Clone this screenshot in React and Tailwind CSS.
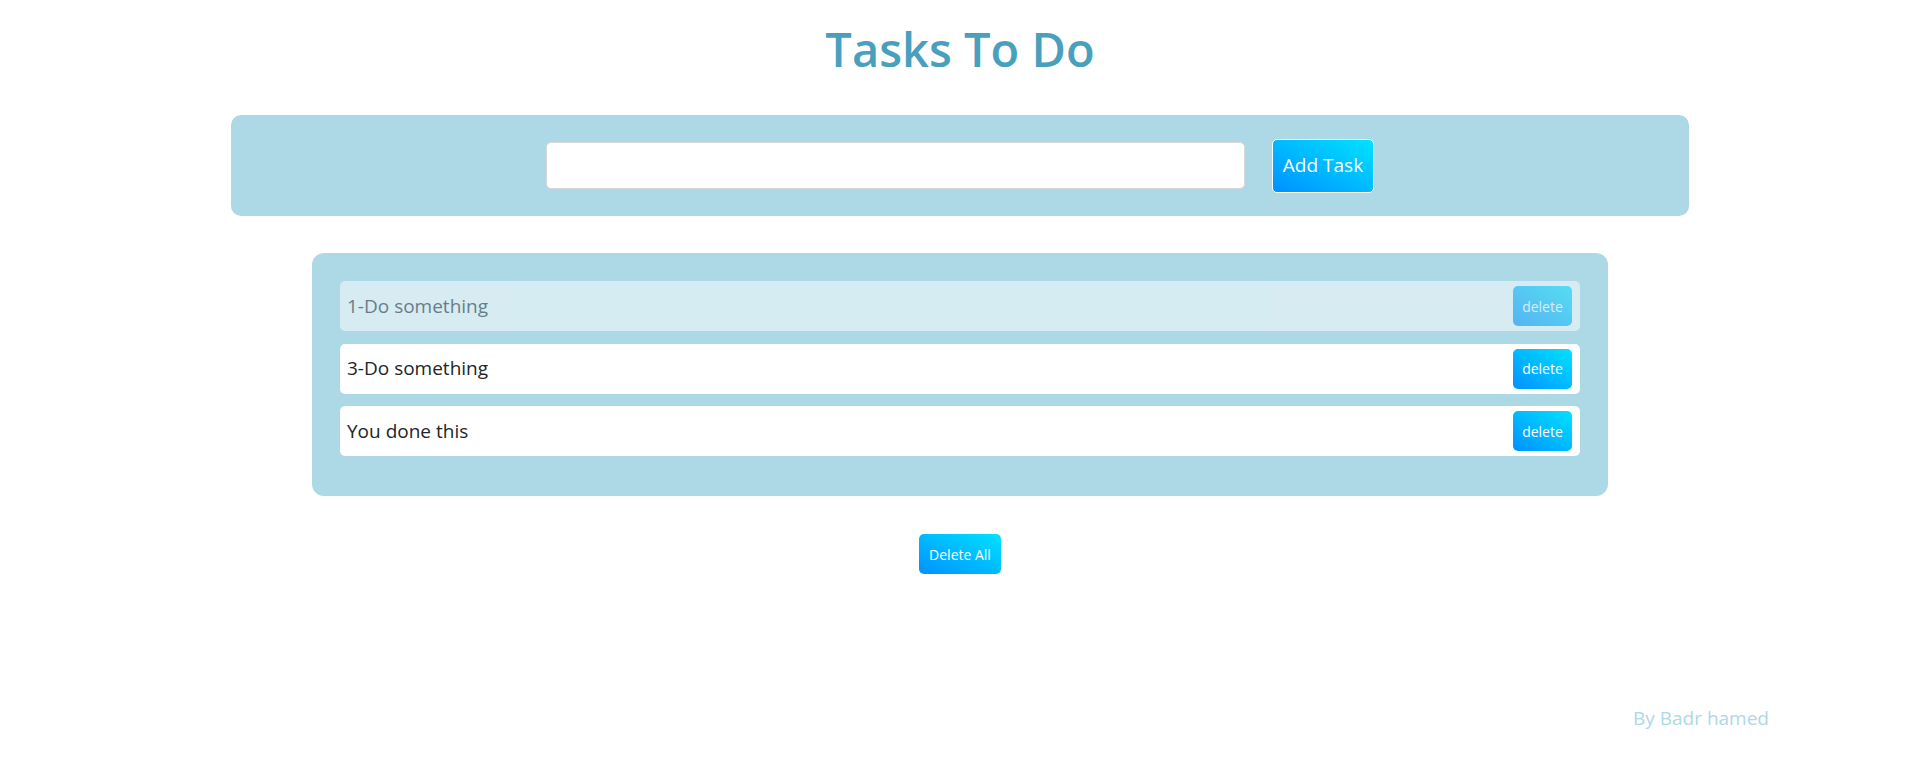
const tasks = [
  { id: 1, text: "1-Do something", done: true },
  { id: 3, text: "3-Do something", done: false },
  { id: 4, text: "You done this", done: false },
];

const gradientBtn =
  "bg-linear-to-tr from-[#0090ff] to-[#00e2ff] text-white rounded-[5px]";

export default function App() {
  return (
    <div className="min-h-[775px] bg-white font-['Open_Sans',sans-serif] text-[#212529]">
      {/* Header */}
      <h1 className="pt-[15px] text-center text-[47px] leading-[68px] font-semibold text-[#49a0bd]">
        Tasks To Do
      </h1>

      {/* New task form */}
      <div className="mx-auto mt-[32px] w-[1458px] h-[101px] bg-[#add8e6] rounded-[10px] flex items-center justify-center gap-[27px]">
        <input
          type="text"
          className="w-[699px] h-[47px] bg-white rounded-[5px] border border-[#d8d8d8] outline-none px-3"
        />
        <button
          className={`${gradientBtn} w-[102px] h-[54px] border border-white text-[19px]`}
        >
          Add Task
        </button>
      </div>

      {/* Task list */}
      <div className="mx-auto mt-[37px] w-[1296px] bg-[#add8e6] rounded-[12px] pt-[28px] pb-[40px] px-[28px] flex flex-col gap-[12.5px]">
        {tasks.map((task) => (
          <div
            key={task.id}
            className={`h-[50px] bg-white rounded-[5px] flex items-center justify-between pl-[7px] pr-[8px] ${
              task.done ? "opacity-50" : ""
            }`}
          >
            <span className="text-[19px]">{task.text}</span>
            <button className={`${gradientBtn} w-[59px] h-[40px] text-[14px]`}>
              delete
            </button>
          </div>
        ))}
      </div>

      {/* Delete all */}
      <div className="mt-[38px] flex justify-center">
        <button className={`${gradientBtn} w-[82px] h-[40px] text-[14px]`}>
          Delete All
        </button>
      </div>

      {/* Footer */}
      <div className="mt-[130px] flex justify-end pr-[151px]">
        <span className="text-[19px] text-[#add8e6]">By Badr hamed</span>
      </div>
    </div>
  );
}
